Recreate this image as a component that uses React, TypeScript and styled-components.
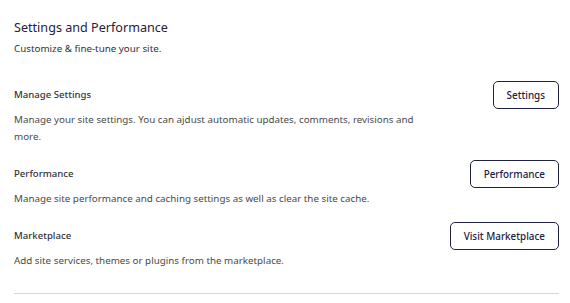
import React from 'react'
import styled, { createGlobalStyle } from 'styled-components'

const GlobalStyle = createGlobalStyle`
    html, body {
        margin: 0;
        padding: 0;
        background: #fff;
    }
    body {
        font-family: 'Noto Sans', 'Open Sans', sans-serif;
        -webkit-font-smoothing: antialiased;
    }
`

const Page = styled.div`
    padding: 18px 11px 0 14px;
    width: 570px;
    box-sizing: border-box;
`

const Title = styled.h2`
    margin: 0;
    color: #1e2142;
    font: normal 400 12.6px/20px 'Noto Sans', sans-serif;
`

const Subtitle = styled.p`
    margin: 3px 0 0 0;
    color: #2f3145;
    font: normal 400 9.8px/16px 'Noto Sans', sans-serif;
`

const List = styled.div`
    margin-top: 24px;
    display: flex;
    flex-direction: column;
    gap: 15px;
`

const Item = styled.section`
    display: flex;
    flex-direction: column;
`

const ItemHeader = styled.div`
    display: flex;
    align-items: center;
    justify-content: space-between;
    height: 28px;
`

const ItemTitle = styled.h4`
    margin: 0;
    color: #333;
    font: normal 500 9.6px/16px 'Noto Sans', sans-serif;
`

const ItemText = styled.p`
    margin: 2px 0 0 0;
    max-width: 400px;
    color: #4a4a4a;
    font: normal 400 9.8px/17px 'Noto Sans', sans-serif;
`

const Button = styled.button`
    height: 28px;
    padding: 0 13px;
    border: 1px solid #1e2142;
    border-radius: 5px;
    background: #fff;
    color: #1e2142;
    font: normal 500 9.9px/16px 'Noto Sans', sans-serif;
    cursor: pointer;
`

const Divider = styled.hr`
    margin: 24px 0 0 0;
    border: 0;
    border-top: 1px solid #d3d7dd;
`

const items = [
    {
        title: 'Manage Settings',
        text: 'Manage your site settings. You can ajdust automatic updates, comments, revisions and more.',
        action: 'Settings',
    },
    {
        title: 'Performance',
        text: 'Manage site performance and caching settings as well as clear the site cache.',
        action: 'Performance',
    },
    {
        title: 'Marketplace',
        text: 'Add site services, themes or plugins from the marketplace.',
        action: 'Visit Marketplace',
    },
]

export default function App() {
    return (
        <>
            <GlobalStyle />
            <Page>
                <Title>Settings and Performance</Title>
                <Subtitle>Customize &amp; fine-tune your site.</Subtitle>
                <List>
                    {items.map(item => (
                        <Item key={item.title}>
                            <ItemHeader>
                                <ItemTitle>{item.title}</ItemTitle>
                                <Button>{item.action}</Button>
                            </ItemHeader>
                            <ItemText>{item.text}</ItemText>
                        </Item>
                    ))}
                </List>
                <Divider />
            </Page>
        </>
    )
}
